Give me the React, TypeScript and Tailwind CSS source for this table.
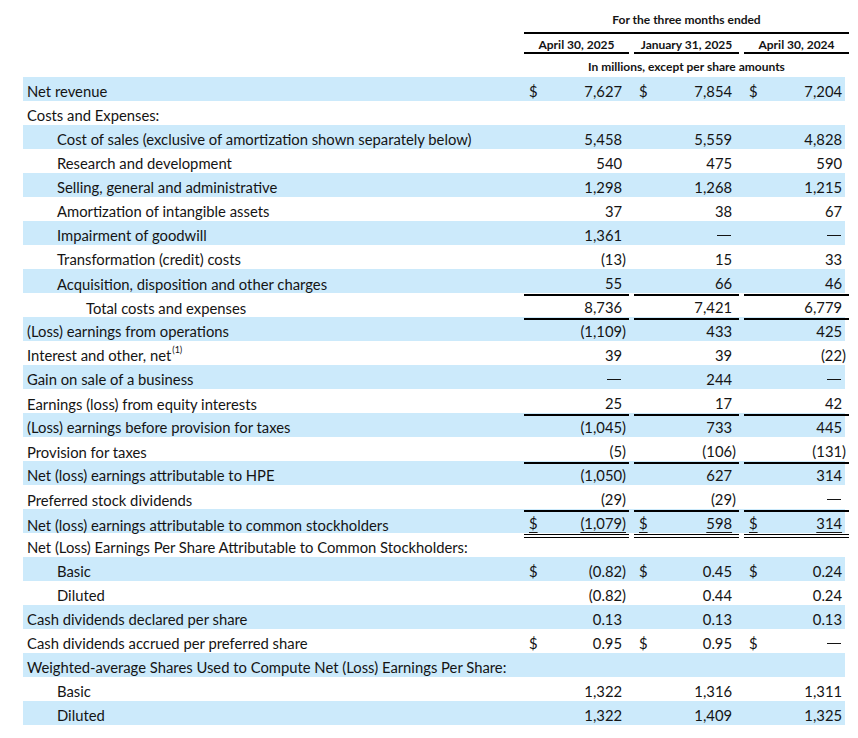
import React from "react";

type Cell = { dollar?: boolean; value: string };

interface Row {
  label: string;
  indent?: 0 | 1 | 2;
  note?: string;
  values?: Cell[];
  line?: "single" | "double";
}

const v = (value: string, dollar = false): Cell => ({ value, dollar });
const DASH = "—";

const rows: Row[] = [
  { label: "Net revenue", values: [v("7,627", true), v("7,854", true), v("7,204", true)] },
  { label: "Costs and Expenses:" },
  { label: "Cost of sales (exclusive of amortization shown separately below)", indent: 1, values: [v("5,458"), v("5,559"), v("4,828")] },
  { label: "Research and development", indent: 1, values: [v("540"), v("475"), v("590")] },
  { label: "Selling, general and administrative", indent: 1, values: [v("1,298"), v("1,268"), v("1,215")] },
  { label: "Amortization of intangible assets", indent: 1, values: [v("37"), v("38"), v("67")] },
  { label: "Impairment of goodwill", indent: 1, values: [v("1,361"), v(DASH), v(DASH)] },
  { label: "Transformation (credit) costs", indent: 1, values: [v("(13)"), v("15"), v("33")] },
  { label: "Acquisition, disposition and other charges", indent: 1, values: [v("55"), v("66"), v("46")], line: "single" },
  { label: "Total costs and expenses", indent: 2, values: [v("8,736"), v("7,421"), v("6,779")], line: "single" },
  { label: "(Loss) earnings from operations", values: [v("(1,109)"), v("433"), v("425")] },
  { label: "Interest and other, net", note: "(1)", values: [v("39"), v("39"), v("(22)")] },
  { label: "Gain on sale of a business", values: [v(DASH), v("244"), v(DASH)] },
  { label: "Earnings (loss) from equity interests", values: [v("25"), v("17"), v("42")], line: "single" },
  { label: "(Loss) earnings before provision for taxes", values: [v("(1,045)"), v("733"), v("445")] },
  { label: "Provision for taxes", values: [v("(5)"), v("(106)"), v("(131)")], line: "single" },
  { label: "Net (loss) earnings attributable to HPE", values: [v("(1,050)"), v("627"), v("314")] },
  { label: "Preferred stock dividends", values: [v("(29)"), v("(29)"), v(DASH)], line: "single" },
  { label: "Net (loss) earnings attributable to common stockholders", values: [v("(1,079)", true), v("598", true), v("314", true)], line: "double" },
  { label: "Net (Loss) Earnings Per Share Attributable to Common Stockholders:" },
  { label: "Basic", indent: 1, values: [v("(0.82)", true), v("0.45", true), v("0.24", true)] },
  { label: "Diluted", indent: 1, values: [v("(0.82)"), v("0.44"), v("0.24")] },
  { label: "Cash dividends declared per share", values: [v("0.13"), v("0.13"), v("0.13")] },
  { label: "Cash dividends accrued per preferred share", values: [v("0.95", true), v("0.95", true), v(DASH, true)] },
  { label: "Weighted-average Shares Used to Compute Net (Loss) Earnings Per Share:" },
  { label: "Basic", indent: 1, values: [v("1,322"), v("1,316"), v("1,311")] },
  { label: "Diluted", indent: 1, values: [v("1,322"), v("1,409"), v("1,325")] },
];

const indentClass = ["pl-1", "pl-[34px]", "pl-[63px]"];
const grid = "grid grid-cols-[496px_105px_105px_105px] gap-x-[5px]";

function ValueCell({ cell, line }: { cell: Cell; line?: Row["line"] }) {
  const negative = cell.value.endsWith(")");
  const underline = line === "double" ? "underline underline-offset-[3px]" : "";
  return (
    <div
      className={`flex items-center justify-between pl-[5px] pr-[3px] pt-[3px] ${
        line === "single" ? "border-b-2 border-black" : ""
      } ${line === "double" ? "border-b-[4px] border-double border-black" : ""}`}
    >
      <span className={underline}>{cell.dollar ? "$" : ""}</span>
      {cell.value === DASH ? (
        // em dash drawn as a rule so it keeps the report's width
        <span className="block w-[14px] border-t-[1.5px] border-[#141414] mr-[5px]" />
      ) : (
        <span className={underline}>
          {cell.value}
          {!negative && <span className="invisible">)</span>}
        </span>
      )}
    </div>
  );
}

export default function App() {
  return (
    <div
      className="w-[858px] h-[738px] bg-white pl-[23px] text-[#141414]"
      style={{ fontFamily: "Lato, 'Liberation Sans', sans-serif" }}
    >
      {/* Column headers */}
      <div className={`${grid} text-[12px] font-bold`}>
        <div />
        <div className="col-span-3 h-[34px] flex items-end justify-center pb-[4px] border-b-2 border-black leading-4">
          For the three months ended
        </div>
        <div />
        {["April 30, 2025", "January 31, 2025", "April 30, 2024"].map((d) => (
          <div key={d} className="h-[20px] flex items-end justify-center border-b-2 border-black leading-[14px]">
            {d}
          </div>
        ))}
        <div />
        <div className="col-span-3 h-[23px] flex items-center justify-center pt-[2px]">
          In millions, except per share amounts
        </div>
      </div>

      {/* Statement rows */}
      <div className="w-[822px] text-[14.8px]">
        {rows.map((r, i) => (
          <div
            key={i}
            className={`${grid} h-6 pr-[1px] ${i % 2 === 0 ? "bg-[#cceafb]" : "bg-white"}`}
          >
            <div className={`flex items-center pt-[3px] whitespace-nowrap ${indentClass[r.indent ?? 0]}`}>
              {r.label}
              {r.note && <sup className="text-[9px] ml-[1px] -top-[5px]">{r.note}</sup>}
            </div>
            {r.values?.map((c, j) => <ValueCell key={j} cell={c} line={r.line} />)}
          </div>
        ))}
      </div>
    </div>
  );
}
